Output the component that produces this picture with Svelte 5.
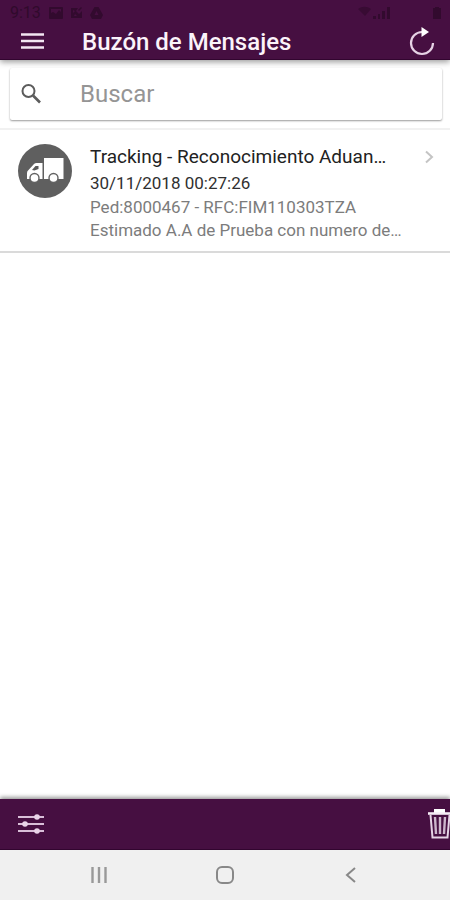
<script>
  let search = $state('');

  const messages = [
    {
      title: 'Tracking - Reconocimiento Aduan…',
      date: '30/11/2018 00:27:26',
      reference: 'Ped:8000467 - RFC:FIM110303TZA',
      preview: 'Estimado A.A de Prueba con numero de…'
    }
  ];

  const visible = $derived(
    messages.filter((m) => Object.values(m).join(' ').toLowerCase().includes(search.toLowerCase()))
  );
</script>

<div class="screen">
  <header>
    <div class="status">
      <span class="time">9:13</span>
      <svg width="14" height="12" viewBox="0 0 14 12">
        <path fill-rule="evenodd" d="M1 0h12a1 1 0 0 1 1 1v10a1 1 0 0 1-1 1H1a1 1 0 0 1-1-1V1a1 1 0 0 1 1-1zM2 2v4l2-1 3 2 3-4 2 2V2z" />
      </svg>
      <svg width="13" height="12" viewBox="0 0 13 12">
        <path fill-rule="evenodd" d="M1 1h7L6 4l3 3 3-3v7H1zM3 3v3l2-2zM4 9h3L5 7z" />
        <path d="M8 3l3-3 1 1-3 3z" />
      </svg>
      <svg width="13" height="12" viewBox="0 0 13 12">
        <path fill-rule="evenodd" d="M4.500 0h4L13 8l-2 4H2L0 8zM6.500 4L4.500 8h4z" />
      </svg>
      <span class="spacer"></span>
      <svg width="36" height="16" viewBox="0 0 36 16">
        <path d="M1 4c4-3 9-3 13 0l-6 7z" opacity=".7" />
        <path d="M16 11h3v3h-3zM21 9h2v5h-2zM25 6h3v8h-3zM30 2h3v12h-3z" />
      </svg>
      <svg class="battery" width="10" height="12" viewBox="0 0 10 12">
        <path d="M3 0h4v1h2v11H1V1h2z" />
      </svg>
    </div>
    <div class="toolbar">
      <button class="menu" aria-label="Menú">
        <svg width="24" height="18" viewBox="0 0 24 18">
          <path d="M1 1.500h23M1 8h23M1 14.500h23" stroke="#f3e6f2" stroke-width="2.600" />
        </svg>
      </button>
      <h1>Buzón de Mensajes</h1>
      <button class="refresh" aria-label="Actualizar">
        <svg width="26" height="30" viewBox="0 0 26 30">
          <path d="M13 5a11 11 0 1 0 11 11" fill="none" stroke="#e6d2e5" stroke-width="2.200" />
          <path d="M12.500 0l7.500 5-7.500 5z" fill="#fff" />
        </svg>
      </button>
    </div>
  </header>

  <main>
    <div class="searchbar">
      <label class="searchbox">
        <svg width="22" height="22" viewBox="0 0 22 22" fill="none" stroke="#5c5c5c">
          <circle cx="7.500" cy="8" r="6" stroke-width="2" />
          <path d="M12 12.500l7 7" stroke-width="2.600" />
        </svg>
        <input type="text" placeholder="Buscar" aria-label="Buscar" bind:value={search} />
      </label>
    </div>

    <ul>
      {#each visible as message}
        <li>
          <span class="avatar">
            <svg width="54" height="54" viewBox="0 0 54 54">
              <path fill="#fff" d="M26 14h19.500v21H26z" />
              <path fill="#fff" d="M24.500 19h-6q-1.500 0-2.500 1l-5.500 6q-1.500 1-1.500 3v6h15.500z" />
              <path fill="#5a5a5a" d="M14 26l3.500-4h3v3l-4 1.500z" />
              <g fill="#fff" stroke="#626262" stroke-width="1.400">
                <circle cx="16.500" cy="34" r="4.500" />
                <circle cx="35.500" cy="34" r="4.500" />
              </g>
            </svg>
          </span>
          <div class="body">
            <div class="heading">
              <h2>{message.title}</h2>
              <svg width="10" height="14" viewBox="0 0 10 14">
                <path d="M2 1.500L8 7l-6 5.500" fill="none" stroke="#c4c4c4" stroke-width="2" />
              </svg>
            </div>
            <p class="date">{message.date}</p>
            <p>{message.reference}</p>
            <p>{message.preview}</p>
          </div>
        </li>
      {/each}
    </ul>
  </main>

  <footer>
    <button class="filter" aria-label="Filtros">
      <svg width="26" height="20" viewBox="0 0 26 20">
        <path d="M0 3h26M0 10h26M0 17h26" stroke="#d9bfd8" stroke-width="2" />
        <g fill="#e9d3e8">
          <circle cx="19" cy="3" r="2.800" />
          <circle cx="7" cy="10" r="2.800" />
          <circle cx="19" cy="17" r="2.800" />
        </g>
      </svg>
    </button>
    <button class="trash" aria-label="Eliminar">
      <svg width="22" height="32" viewBox="0 0 22 32">
        <path d="M6 1h11v4H6z" fill="#fff" />
        <path d="M0 5.500h22" stroke="#f6ecf6" stroke-width="2.600" />
        <path d="M2.500 7l2 22.500h15l2-22.500" fill="none" stroke="#e6d4e6" stroke-width="2" />
        <path d="M7 9l1 17M12 9v17M17 9l-1 17" stroke="#cdb6cc" stroke-width="2.400" />
      </svg>
    </button>
  </footer>

  <nav>
    <button aria-label="Recientes">
      <svg width="18" height="18" viewBox="0 0 18 18">
        <path d="M2.500 1v16M9 1v16M15.500 1v16" stroke="#999" stroke-width="2.400" />
      </svg>
    </button>
    <button aria-label="Inicio">
      <svg width="20" height="20" viewBox="0 0 20 20">
        <rect x="2" y="2" width="16" height="16" rx="5" fill="none" stroke="#888" stroke-width="2" />
      </svg>
    </button>
    <button aria-label="Atrás">
      <svg width="12" height="18" viewBox="0 0 12 18">
        <path d="M10 2L2 9l8 7" fill="none" stroke="#888" stroke-width="2" />
      </svg>
    </button>
  </nav>
</div>

<style>
  :global(body) {
    margin: 0;
    background: #fff;
  }

  .screen {
    display: flex;
    flex-direction: column;
    min-height: 100vh;
    font-family: Roboto, sans-serif;
    color: #222;
  }

  svg {
    display: block;
    flex: none;
  }

  button {
    display: flex;
    align-items: center;
    justify-content: center;
    padding: 0;
    border: none;
    background: none;
  }

  h1, h2, p, ul {
    margin: 0;
    padding: 0;
    font-weight: 400;
  }

  header {
    background: #460f41;
    border-bottom: 1px solid #32052f;
    box-shadow: 0 2px 6px rgba(0, 0, 0, 0.4);
  }

  .status {
    display: flex;
    align-items: center;
    gap: 7px;
    height: 26px;
    padding: 0 8px 0 10px;
    color: #300a2c;
    fill: #320a2e;
  }

  .time {
    width: 32px;
    font-size: 16px;
    line-height: 20px;
  }

  .spacer {
    flex: 1;
  }

  .battery {
    margin-left: 32px;
  }

  .toolbar {
    display: flex;
    align-items: center;
    height: 31px;
    padding: 0 15px 2px 20px;
  }

  h1 {
    flex: 1;
    margin-left: 38px;
    font-size: 24px;
    font-weight: 500;
    line-height: 30px;
    color: #fbf3fa;
  }

  main {
    flex: 1;
  }

  .searchbar {
    padding: 8px 8px 8px 10px;
    border-bottom: 2px solid #f1f1f1;
  }

  .searchbox {
    display: flex;
    align-items: center;
    height: 52px;
    padding-left: 11px;
    border-radius: 2px;
    background: #fff;
    box-shadow: 0 1px 2px rgba(0, 0, 0, 0.4);
  }

  input {
    flex: 1;
    min-width: 0;
    height: 40px;
    margin-left: 37px;
    padding: 0;
    border: none;
    outline: none;
    background: none;
    font-family: inherit;
    font-size: 24px;
    color: #444;
  }

  input::placeholder {
    color: #959595;
    opacity: 1;
  }

  ul {
    list-style: none;
  }

  li {
    display: flex;
    padding: 14px 16px 9px 18px;
    border-bottom: 2px solid #dadada;
  }

  .avatar {
    flex: none;
    height: 54px;
    margin-right: 18px;
    border-radius: 50%;
    background: #5f5f5f;
  }

  .body {
    flex: 1;
    min-width: 0;
  }

  .heading {
    display: flex;
    align-items: center;
    justify-content: space-between;
    height: 25px;
    margin-bottom: 3px;
  }

  h2 {
    font-size: 19px;
    white-space: nowrap;
  }

  p {
    font-size: 17px;
    line-height: 23px;
    white-space: nowrap;
    color: #7c7c7c;
  }

  .date {
    padding-bottom: 1px;
    color: #303030;
  }

  footer {
    display: flex;
    align-items: center;
    justify-content: space-between;
    height: 50px;
    padding-left: 18px;
    background: #460f41;
    border-bottom: 1px solid #32052f;
    box-shadow: 0 -2px 4px rgba(0, 0, 0, 0.4);
  }

  nav {
    display: flex;
    height: 50px;
    padding: 0 36px;
    background: #f0f0f0;
  }

  nav button {
    flex: 1;
  }
</style>
